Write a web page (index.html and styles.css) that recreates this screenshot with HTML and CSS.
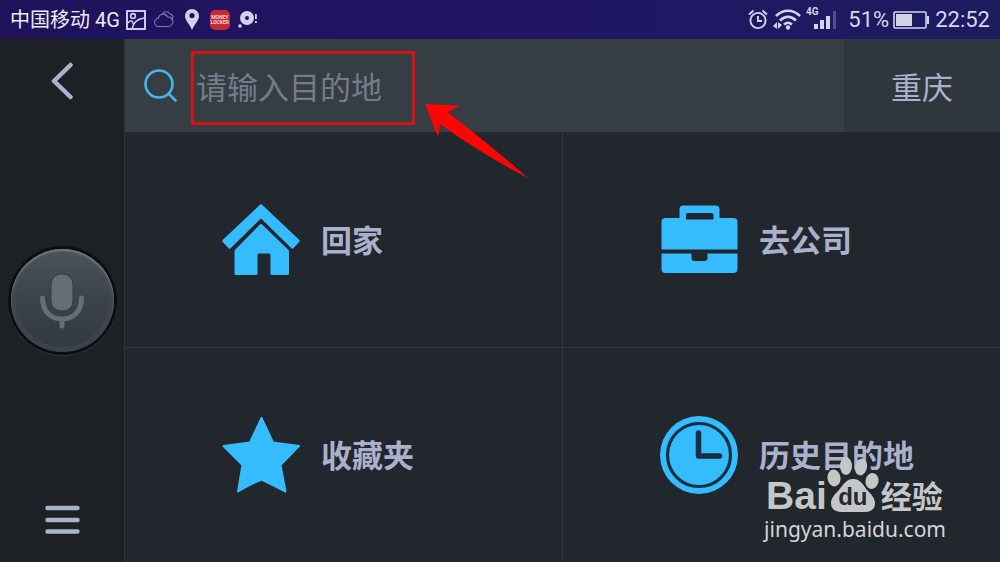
FILE: index.html
```html
<!DOCTYPE html>
<html lang="zh-CN">
<head>
<meta charset="utf-8">
<meta name="viewport" content="width=device-width, initial-scale=1">
<title>导航</title>
<link rel="stylesheet" href="styles.css">
</head>
<body>
<header class="status">
  <div class="status-group">
    <span class="carrier">中国移动 4G</span>
    <svg class="s-image" width="20" height="20" viewBox="0 0 20 20" fill="none" stroke="#cfcaf0" stroke-width="2"><rect x="1" y="1" width="18" height="18"/><circle cx="7" cy="6" r="2.4" stroke-width="1.6"/><path d="M2 13c2-3 4-3 5 0l1 2M6 19C7 13 11 9 18 8" stroke-width="1.6"/></svg>
    <svg class="s-cloud" width="20" height="17" viewBox="0 0 20 17" fill="none" stroke="#8076bb" stroke-width="1.1"><path d="M5 15.500a4.200 4.200 0 0 1-.5-8.400A4.800 4.800 0 0 1 13.600 6a4.700 4.700 0 0 1 1 9.500z"/><path d="M8 3.500a4.500 4.500 0 0 1 8-.5c3 0 4 4.500 1.500 6"/></svg>
    <svg class="s-pin" width="14" height="21" viewBox="0 0 14 21" fill="#d3cfec" fill-rule="evenodd"><path d="M7 0a7 7 0 0 1 7 7c0 4.500-5 8.500-7 14C5 15.500 0 11.500 0 7a7 7 0 0 1 7-7zm0 4a2.600 2.600 0 1 0 0 5.200A2.600 2.600 0 0 0 7 4z"/></svg>
    <span class="s-app">MONEY<br>LOCKER</span>
    <svg class="s-disc" width="20" height="19" viewBox="0 0 20 19" fill="#d3cfec"><path fill-rule="evenodd" d="M9 1a7 7 0 1 1 0 14A7 7 0 0 1 9 1zm0 5a2 2 0 1 0 0 4 2 2 0 0 0 0-4z"/><circle cx="2" cy="16" r="1.800"/><path d="M17 4h1.800v5H17zM17 11h1.800v2H17z"/></svg>
  </div>
  <div class="status-group">
    <svg class="s-alarm" width="20" height="21" viewBox="0 0 20 21" fill="none" stroke="#d6d3f0" stroke-width="1.900"><circle cx="10" cy="11.500" r="7.600"/><path d="M10 7v5h4M1 5.500l4.500-4M19 5.500l-4.500-4"/></svg>
    <svg class="s-wifi" width="29" height="21" viewBox="0 0 29 21" fill="none" stroke="#d6d3f0" stroke-width="2.600"><path d="M3 7c7-7 17-7 24 0M7 11.500c5-5 11-5 16 0M11 15.500c3-2.500 5-2.500 8 0"/><circle cx="15" cy="18.500" r="2.200" fill="#d6d3f0" stroke="none"/><path d="M0 17l4-4v7zM9 16l-4-3v7z" fill="#d6d3f0" stroke="none"/></svg>
    <svg class="s-signal" width="31" height="24" viewBox="0 0 31 24" fill="#d6d3f0"><text x="0" y="9" class="net">4G</text><path d="M8 18h4v5H8zM14 14h4v9h-4zM20 10h4v13h-4z"/><path d="M27 5h3v18h-3z" fill="#514e92"/></svg>
    <span class="battery-text">51%</span>
    <svg class="s-battery" width="36" height="18" viewBox="0 0 36 18" fill="none" stroke="#d6d3f0" stroke-width="1.600"><rect x="1" y="1" width="32" height="16" rx="1"/><path d="M3 3h16v12H3z" fill="#d4d2e6" stroke="none"/><path d="M35 5v8" stroke-width="2"/></svg>
    <span>22:52</span>
  </div>
</header>
<div class="app">
  <nav class="side">
    <button class="icon-btn back" type="button" aria-label="返回"><svg width="24" height="40" viewBox="0 0 24 40" fill="none" stroke="#a9b3cb" stroke-width="4.500" stroke-linecap="round" stroke-linejoin="round"><path d="M20.500 3L4 19l16.500 16"/></svg></button>
    <button class="mic" type="button" aria-label="语音"><svg width="44" height="56" viewBox="0 0 44 56"><rect x="11" y="1" width="22" height="37" rx="10" fill="#676d75" stroke="#333a43"/><path d="M2.500 25c0 13 8 21 19.500 21s19.500-8 19.500-21M22 46v7" fill="none" stroke="#676d75" stroke-width="5" stroke-linecap="round"/></svg></button>
    <button class="icon-btn menu" type="button" aria-label="菜单"><svg width="36" height="30" viewBox="0 0 36 30" stroke="#a9b3cb" stroke-width="4.400" stroke-linecap="round"><path d="M3.500 3h30M3.500 15h30M3.500 26.500h30"/></svg></button>
  </nav>
  <main class="main">
    <div class="top">
      <form class="search">
        <label class="search-icon" for="dest" aria-label="搜索"><svg width="34" height="34" viewBox="0 0 34 34" fill="none" stroke="#43b7ee" stroke-width="2.600" stroke-linecap="round"><circle cx="15" cy="15" r="13.500"/><path d="M24.500 24.500L31.500 31.500"/></svg></label>
        <input class="dest" id="dest" type="text" placeholder="请输入目的地">
        <span class="mark-box"></span>
        <svg class="mark-arrow" width="104" height="76" viewBox="0 0 104 76"><path d="M0 0L35 1.500 23 8.500Q58 35 103 74 58 51 15 20L13 33z" fill="#fb0505"/></svg>
      </form>
      <button class="city" type="button">重庆</button>
    </div>
    <div class="grid">
      <button class="cell" type="button">
        <svg width="78" height="78" viewBox="0 0 78 78" fill="#35bcff" stroke="#35bcff" stroke-linejoin="round"><path d="M39 4.500L76.500 40l-6 6.500L39 15.500 7.500 46.500l-6-6.500z" stroke-width="2.500"/><path d="M39 24.500L65.500 50v22.500H50V54q0-3-3-3H37q-3 0-3 3v18.500H14V50z" stroke-width="3"/></svg>
        <span class="cell-name">回家</span>
      </button>
      <button class="cell" type="button">
        <svg width="78" height="78" viewBox="0 0 78 78" fill="#35bcff"><path fill-rule="evenodd" d="M19.500 17V8.500q0-4 4-4h32q4 0 4 4V17h14q4 0 4 4v27.500h-76V21q0-4 4-4zM26 18.500h27.500V14q0-2-2-2H28q-2 0-2 2z"/><path d="M1.500 52.500h30V57q0 3 3 3h10q3 0 3-3v-4.500h30V68q0 4-4 4h-68q-4 0-4-4z"/></svg>
        <span class="cell-name">去公司</span>
      </button>
      <button class="cell" type="button">
        <svg width="78" height="78" viewBox="0 0 78 78" fill="#35bcff" stroke="#35bcff" stroke-width="2" stroke-linejoin="round"><path d="M39.500 2L51 26.500 77 30 58.500 49 63.500 75.500Q51 69 39.500 63.500 27 69 16 75.500L20.500 49 1.500 30 28 26.500z"/></svg>
        <span class="cell-name">收藏夹</span>
      </button>
      <button class="cell" type="button">
        <svg width="78" height="78" viewBox="0 0 78 78" fill="none"><circle cx="39" cy="39" r="39" fill="#35bcff"/><circle cx="39" cy="39" r="31.500" stroke="#10303f" stroke-width="3.200"/><path d="M38.500 17v23h21" stroke="#17303f" stroke-width="5.500" stroke-linecap="round" stroke-linejoin="round"/></svg>
        <span class="cell-name">历史目的地</span>
      </button>
    </div>
  </main>
  <div class="watermark">
    <div class="logo">
      <span class="bai">Bai</span>
      <span class="paw"><svg width="52" height="56" viewBox="0 0 52 56" fill="#c5c6c8"><ellipse cx="7" cy="21" rx="6.500" ry="8.500" transform="rotate(-8 7 21)"/><ellipse cx="19" cy="9" rx="6" ry="9"/><ellipse cx="34" cy="10" rx="6" ry="8.500" transform="rotate(12 34 10)"/><ellipse cx="45" cy="24" rx="6.500" ry="8" transform="rotate(12 45 24)"/><path d="M26 22c8 0 10 6 14 11 4 4 8 8 8 13 0 6-4 9-10 9H15c-7 0-11-3-11-9 0-5 4-9 8-13 4-5 7-11 14-11z"/></svg><span class="du">du</span></span>
      <span class="jingyan">经验</span>
    </div>
    <div class="url">jingyan.baidu.com</div>
  </div>
</div>
</body>
</html>
```

FILE: styles.css
```css
* {
  box-sizing: border-box;
}

body {
  margin: 0;
  min-height: 100vh;
  display: flex;
  flex-direction: column;
  background: #22262d;
  color: #a9b1cb;
  font-family: Roboto, "Noto Sans CJK SC", sans-serif;
}

button {
  margin: 0;
  padding: 0;
  border: 0;
  background: none;
  color: inherit;
  font: inherit;
}

svg {
  display: block;
  flex: none;
}

.status {
  display: flex;
  justify-content: space-between;
  height: 39px;
  padding: 0 10px;
  background: linear-gradient(90deg, #1f125b, #211664 50%, #1d1b60);
  color: #d9d6ef;
  font-size: 22px;
  line-height: 40px;
}

.status-group {
  display: flex;
  align-items: center;
  white-space: nowrap;
}

.carrier {
  color: #eceaf6;
  font-size: 20px;
}

.s-image { margin-left: 6px; }
.s-cloud { margin-left: 8px; }
.s-pin { margin-left: 11px; }

.s-app {
  width: 20px;
  height: 20px;
  margin-left: 11px;
  padding-top: 5px;
  border-radius: 5px;
  background: #c42c35;
  color: #f3d3d6;
  font-size: 5px;
  font-weight: 700;
  line-height: 5px;
  text-align: center;
}

.s-disc { margin-left: 8px; }
.s-wifi { margin-left: 5px; }
.s-signal { margin: -4px 0 0 4px; }
.battery-text { margin-left: 11px; }
.s-battery { margin: 0 6px 0 4px; }

.net {
  font-size: 10px;
  font-weight: 700;
}

.app {
  position: relative;
  flex: 1;
  display: flex;
}

.side {
  flex: none;
  width: 125px;
  display: flex;
  flex-direction: column;
  align-items: center;
  justify-content: space-between;
  padding: 23px 0 27px;
  border-right: 1px solid #30343e;
  background: #1d2126;
}

.mic {
  display: flex;
  align-items: center;
  justify-content: center;
  width: 103px;
  height: 103px;
  margin-bottom: 6px;
  border-radius: 50%;
  background: linear-gradient(#4d535c, #3a424c 50%, #323942);
  box-shadow: 0 0 0 3px #0a0e13, 0 1px 1px 3px #30353b,
    inset 0 2px 2px #747981, inset 0 0 0 5px #49505866;
}

.main {
  flex: 1;
  min-width: 0;
  display: flex;
  flex-direction: column;
}

.top {
  display: flex;
  height: 94px;
  border-bottom: 1px solid #252a31;
  font-size: 31px;
}

.search {
  position: relative;
  flex: 1;
  min-width: 0;
  display: flex;
  align-items: center;
  gap: 18px;
  padding-left: 19px;
  background: #363d43;
}

.dest {
  flex: 1;
  min-width: 0;
  height: 72px;
  padding: 6px 0 0;
  border: 0;
  outline: 0;
  background: none;
  color: #c4cadb;
  font: inherit;
}

.dest::placeholder {
  color: #747c8b;
  opacity: 1;
}

.mark-box {
  position: absolute;
  top: 12px;
  left: 66px;
  width: 224px;
  height: 74px;
  border: 3px solid #d01418;
  pointer-events: none;
}

.mark-arrow {
  position: absolute;
  top: 65px;
  left: 300px;
  pointer-events: none;
}

.city {
  width: 156px;
  background: #2f363e;
}

.grid {
  flex: 1;
  display: grid;
  grid-template-columns: 1fr 1fr;
  grid-template-rows: 1fr 1fr;
  gap: 1px;
  background: #303740;
}

.cell {
  display: flex;
  align-items: center;
  gap: 21px;
  padding-left: 97px;
  background: #22262d;
  font-size: 31px;
  font-weight: 700;
  text-align: left;
}

.cell-name {
  padding-bottom: 4px;
}

.watermark {
  position: absolute;
  right: 54px;
  bottom: 21px;
  color: #d4d5d7;
}

.logo {
  display: flex;
  align-items: flex-end;
  padding-left: 2px;
  color: #c5c6c8;
}

.bai {
  font: 700 39px/42px "Liberation Sans", Arial, sans-serif;
}

.paw {
  position: relative;
  margin-bottom: 4px;
}

.du {
  position: absolute;
  left: 0;
  right: 0;
  bottom: 2px;
  color: #25292f;
  font: 700 24px/28px "Liberation Sans", Arial, sans-serif;
  text-align: center;
}

.jingyan {
  margin-left: 2px;
  font-size: 31px;
  font-weight: 700;
  line-height: 38px;
}

.url {
  font: 21px/24px "Noto Sans", sans-serif;
}
```
